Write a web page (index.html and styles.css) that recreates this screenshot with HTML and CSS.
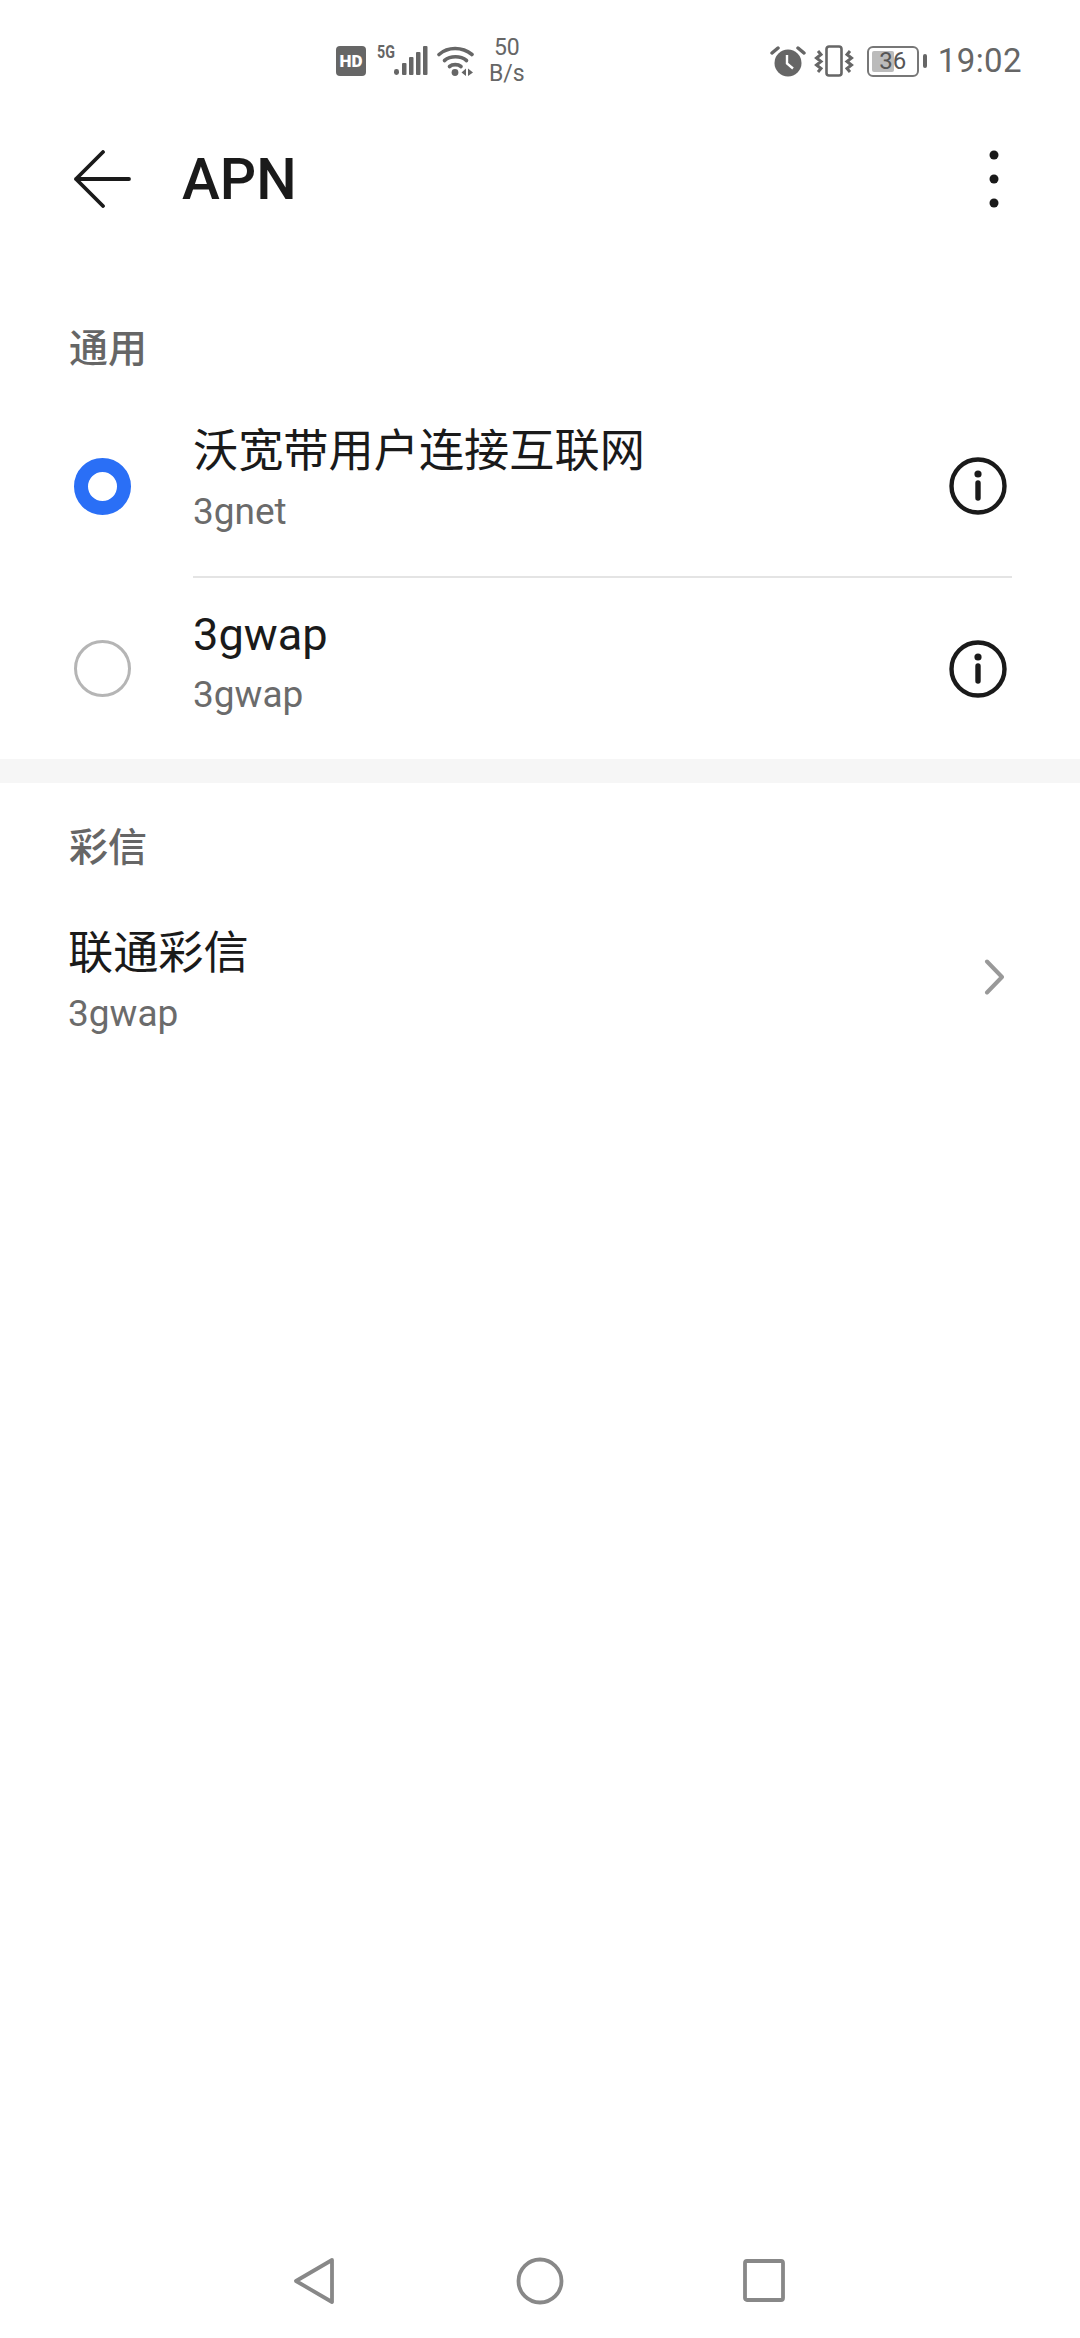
FILE: index.html
```html
<!DOCTYPE html>
<html lang="zh-CN">
<head>
	<meta charset="UTF-8">
	<title>APN</title>
	<link rel="stylesheet" href="styles.css">
</head>
<body>
	<div class="page">
		<div class="statusbar">
			<div class="status-left">
				<svg class="ic-hd" width="30" height="30" viewBox="0 0 30 30"><rect width="30" height="30" rx="4" fill="#666"/></svg>
				<span class="hd-text">HD</span>
				<div class="signal">
					<span class="five-g">5G</span>
					<svg width="34" height="32" viewBox="0 0 34 32"><g fill="#666"><rect x="0" y="24" width="5" height="6" rx="2.4"/><rect x="8" y="18" width="4.5" height="12" rx="1"/><rect x="15" y="12" width="4.5" height="18" rx="1"/><rect x="22" y="7" width="4.5" height="23" rx="1"/><rect x="29" y="1" width="4.5" height="29" rx="1"/></g></svg>
				</div>
				<svg class="ic-wifi" width="38" height="32" viewBox="0 0 38 32"><g fill="none" stroke="#666" stroke-width="3.6" stroke-linecap="round"><path d="M2 9.5C11 1.5 25 1.500 35 9.500"/><path d="M7.500 15.500C13.500 10.500 23.500 10.500 29.500 15.500"/><path d="M12.500 21.500C15.500 19 21 19 24 21.500"/></g><circle cx="18" cy="27.500" r="3.400" fill="#666"/><path d="M24.500 27.500L29 23.500V31ZM31 23.500L36 27.500L31 31Z" fill="#666"/></svg>
				<div class="speed"><span>50</span><span>B/s</span></div>
			</div>
			<div class="status-right">
				<svg width="36" height="32" viewBox="0 0 36 32"><circle cx="18" cy="18" r="13.500" fill="#666"/><path d="M17 10V18.500L23 23.500" fill="none" stroke="#fff" stroke-width="2.400"/><path d="M2 8L8 3M34 8L28 3" fill="none" stroke="#666" stroke-width="3.500" stroke-linecap="round"/></svg>
				<svg width="42" height="32" viewBox="0 0 42 32"><rect x="13.500" y="1.500" width="15" height="29" rx="2.500" fill="none" stroke="#666" stroke-width="2.600"/><path d="M5 6L8 9.500L3.500 13L8 16.500L3.500 20L8 23.500L5 27M37 6L34 9.500L38.500 13L34 16.500L38.500 20L34 23.500L37 27" fill="none" stroke="#666" stroke-width="3"/></svg>
				<div class="battery">
					<div class="battery-body"><div class="battery-fill"></div><span class="battery-num">36</span></div>
					<div class="battery-tip"></div>
				</div>
				<span class="clock">19:02</span>
			</div>
		</div>

		<div class="header">
			<svg width="58" height="58" viewBox="0 0 58 58"><path d="M30 2L3 29L30 56M3 29H56" fill="none" stroke="#1a1a1a" stroke-width="3.800" stroke-linecap="round" stroke-linejoin="round"/></svg>
			<div class="header-title">APN</div>
			<svg class="more" width="10" height="58" viewBox="0 0 10 58"><g fill="#1a1a1a"><circle cx="5" cy="5" r="4.500"/><circle cx="5" cy="29" r="4.500"/><circle cx="5" cy="53" r="4.500"/></g></svg>
		</div>

		<div class="section">
			<div class="section-label">通用</div>
			<div class="apn-row">
				<div class="radio radio-on"></div>
				<div class="apn-main">
					<div class="apn-text">
						<div class="apn-name">沃宽带用户连接互联网</div>
						<div class="apn-sub">3gnet</div>
					</div>
					<svg class="info" width="58" height="58" viewBox="0 0 58 58"><circle cx="29" cy="29" r="26.500" fill="none" stroke="#1a1a1a" stroke-width="4.400"/><circle cx="29" cy="17" r="3.600" fill="#1a1a1a"/><path d="M29 26V41" stroke="#1a1a1a" stroke-width="5.400" stroke-linecap="round"/></svg>
				</div>
			</div>
			<div class="apn-row row-last">
				<div class="radio"></div>
				<div class="apn-main no-line">
					<div class="apn-text">
						<div class="apn-name">3gwap</div>
						<div class="apn-sub">3gwap</div>
					</div>
					<svg class="info" width="58" height="58" viewBox="0 0 58 58"><circle cx="29" cy="29" r="26.500" fill="none" stroke="#1a1a1a" stroke-width="4.400"/><circle cx="29" cy="17" r="3.600" fill="#1a1a1a"/><path d="M29 26V41" stroke="#1a1a1a" stroke-width="5.400" stroke-linecap="round"/></svg>
				</div>
			</div>
		</div>

		<div class="gap"></div>

		<div class="section">
			<div class="section-label label-mms">彩信</div>
			<div class="mms-row">
				<div class="apn-text">
					<div class="apn-name">联通彩信</div>
					<div class="apn-sub">3gwap</div>
				</div>
				<svg class="chevron" width="20" height="36" viewBox="0 0 20 36"><path d="M3 2.500L18 18L3 33.500" fill="none" stroke="#999" stroke-width="4" stroke-linecap="round" stroke-linejoin="round"/></svg>
			</div>
		</div>

		<div class="spacer"></div>

		<div class="navbar">
			<svg width="48" height="48" viewBox="0 0 48 48"><path d="M42 3L6 24L42 45Z" fill="none" stroke="#888" stroke-width="3.800" stroke-linejoin="round"/></svg>
			<svg width="48" height="48" viewBox="0 0 48 48"><circle cx="24" cy="24" r="21.500" fill="none" stroke="#888" stroke-width="3.800"/></svg>
			<svg width="48" height="48" viewBox="0 0 48 48"><rect x="3" y="4" width="38" height="39" rx="2" fill="none" stroke="#888" stroke-width="3.800"/></svg>
		</div>
	</div>
</body>
</html>
```

FILE: styles.css
```css
*{
	box-sizing: border-box;
}
html,body{
	margin: 0;
	padding: 0;
	background: #fff;
}
body{
	font-family: Roboto, "Noto Sans CJK SC", sans-serif;
	color: #1a1a1a;
}
.page{
	width: 1080px;
	height: 2338px;
	display: flex;
	flex-direction: column;
	overflow: hidden;
}

/* status bar */
.statusbar{
	height: 90px;
	padding: 45px 58px 0 336px;
	display: flex;
	justify-content: space-between;
	align-items: flex-start;
	color: #666;
}
.status-left,.status-right{
	display: flex;
	align-items: center;
	height: 32px;
}
.status-left{
	position: relative;
}
.hd-text{
	position: absolute;
	left: 0;
	top: 1px;
	width: 30px;
	text-align: center;
	font-size: 17px;
	line-height: 30px;
	font-weight: 900;
	color: #fff;
}
.signal{
	display: flex;
	align-items: flex-end;
	margin-left: 11px;
	position: relative;
	padding-left: 17px;
}
.five-g{
	position: absolute;
	left: 0;
	top: -3px;
	font-size: 19px;
	line-height: 20px;
	font-weight: 700;
	transform: scaleX(0.75);
	transform-origin: left top;
}
.ic-wifi{
	margin-left: 9px;
}
.speed{
	margin-left: 14px;
	display: flex;
	flex-direction: column;
	align-items: center;
	font-size: 23px;
	line-height: 26px;
}
.status-right svg{
	margin-right: 7px;
}
.battery{
	display: flex;
	align-items: center;
	margin-left: 5px;
}
.battery-body{
	position: relative;
	width: 52px;
	height: 31px;
	border: 2.5px solid #777;
	border-radius: 6px;
	display: flex;
	align-items: center;
	justify-content: center;
}
.battery-fill{
	position: absolute;
	left: 3px;
	top: 3px;
	bottom: 3px;
	width: 22px;
	background: #bbb;
	border-radius: 2px;
}
.battery-num{
	position: relative;
	font-size: 24px;
	line-height: 26px;
	color: #555;
}
.battery-tip{
	width: 4px;
	height: 14px;
	margin-left: 4px;
	background: #666;
	border-radius: 2px;
}
.clock{
	margin-left: 11px;
	font-size: 33px;
	line-height: 32px;
	letter-spacing: 0.4px;
	color: #666;
}

/* title bar */
.header{
	height: 178px;
	padding: 0 81px 0 73px;
	display: flex;
	align-items: center;
}
.header-title{
	flex: 1;
	margin-left: 51px;
	font-size: 57px;
	font-weight: 500;
}

/* lists */
.section-label{
	height: 127px;
	padding: 57px 0 0 69px;
	font-size: 39px;
	line-height: 48px;
	font-weight: 500;
	color: #666;
}
.apn-row{
	height: 183px;
	display: flex;
	align-items: center;
	padding-left: 74px;
}
.row-last{
	height: 181px;
}
.radio{
	width: 57px;
	height: 57px;
	flex-shrink: 0;
	border-radius: 50%;
	border: 3px solid #b5b5b5;
}
.radio-on{
	border: 14px solid #2a6ff6;
}
.apn-main{
	flex: 1;
	height: 100%;
	margin-left: 62px;
	margin-right: 68px;
	padding-right: 5px;
	display: flex;
	align-items: center;
	justify-content: space-between;
	border-bottom: 2px solid #e4e4e4;
}
.no-line{
	border-bottom: 0;
}
.apn-text{
	display: flex;
	flex-direction: column;
	padding-bottom: 9px;
}
.apn-name{
	font-size: 45.2px;
	line-height: 60px;
}
.apn-sub{
	margin-top: 1px;
	font-size: 37px;
	line-height: 58px;
	color: #6b6b6b;
}
.gap{
	height: 24px;
	background: #f6f6f6;
}
.label-mms{
	height: 141px;
	padding-top: 41px;
}
.mms-row{
	display: flex;
	align-items: center;
	justify-content: space-between;
	padding: 0 76px 0 68px;
}
.chevron{
	margin-bottom: 22px;
}
.spacer{
	flex: 1;
}

/* bottom navigation */
.navbar{
	height: 114px;
	display: flex;
	align-items: center;
	justify-content: center;
	gap: 178px;
}
```
